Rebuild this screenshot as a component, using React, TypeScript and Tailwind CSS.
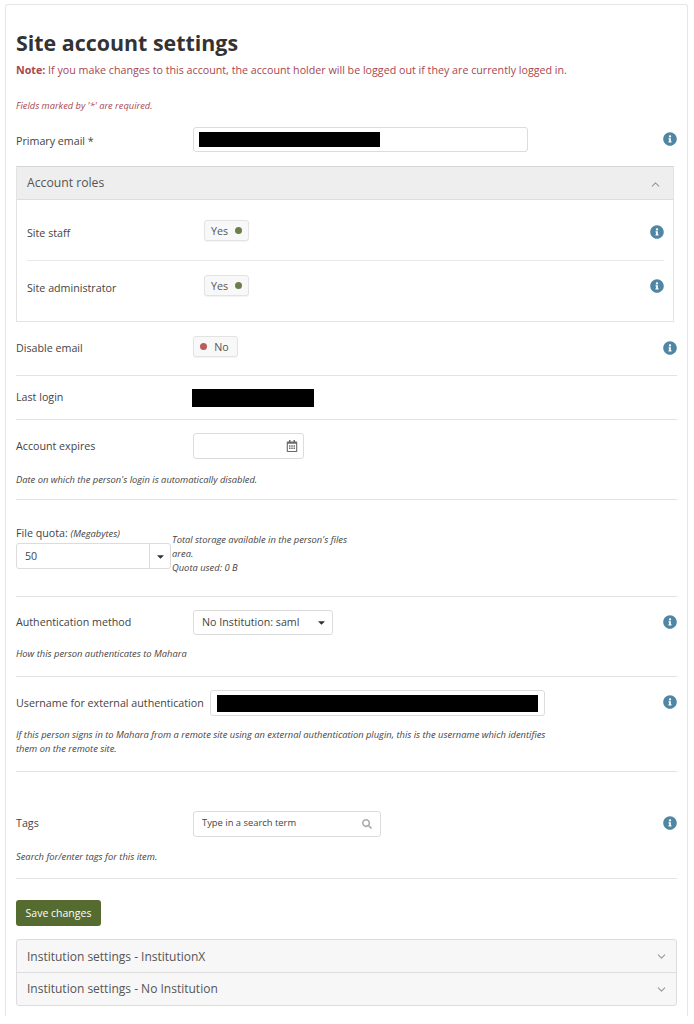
import { FaInfoCircle, FaRegCalendarAlt, FaSearch, FaCaretDown } from "react-icons/fa";
import { ChevronUp, ChevronDown } from "lucide-react";

const Info = () => <FaInfoCircle className="text-[#4f86a3] text-[14px] shrink-0" />;

function Toggle({ yes }: { yes: boolean }) {
  return (
    <div className="w-[45px] h-[21px] border border-[#e3e3e3] rounded-[3px] bg-[#f8f8f8] flex items-center justify-center gap-[7px] text-[10.7px] text-[#555] shadow-[0_1px_1px_rgba(0,0,0,0.05)]">
      {yes ? (
        <>
          <span className="mt-[1px]">Yes</span>
          <span className="w-[7px] h-[7px] rounded-full bg-[#6b7f4a]" />
        </>
      ) : (
        <>
          <span className="w-[7px] h-[7px] rounded-full bg-[#b85c5c]" />
          <span className="mr-[2px] mt-[1px]">No</span>
        </>
      )}
    </div>
  );
}

const Label = ({ children, w = "w-[177px]", className = "" }: { children: React.ReactNode; w?: string; className?: string }) => (
  <div className={`${w} shrink-0 text-[10.7px] text-[#444] ${className}`}>{children}</div>
);

const Desc = ({ children, className = "" }: { children: React.ReactNode; className?: string }) => (
  <div className={`text-[9.35px] italic leading-[14px] text-[#444] ${className}`}>{children}</div>
);

const inputBox = "bg-white border border-[#dcdcdc] rounded-[3px]";

export default function App() {
  return (
    <div className="bg-white h-[1024px] pt-[4px] pl-[5px] pr-[6px] font-['Open_Sans',sans-serif] text-[#444]">
      <div className="h-[1012px] border-x border-t border-[#e6e6e6] rounded-t-[3px] px-[10px]">
        <h1 className="pt-[24px] text-[21.4px] leading-[28px] font-bold text-[#333]">Site account settings</h1>
        <p className="mt-[5px] text-[10.7px] leading-[16px] text-[#a8474f]">
          <b>Note:</b> If you make changes to this account, the account holder will be logged out if they are currently logged in.
        </p>
        <p className="mt-[21px] text-[9.3px] leading-[14px] italic text-[#a8474f]">Fields marked by '*' are required.</p>

        <div className="mt-[14px] h-[27px] flex items-start">
          <Label className="mt-[6px]">Primary email *</Label>
          <div className={`${inputBox} w-[335px] h-[25px] flex items-center px-[5px]`}>
            <div className="w-[181px] h-[15px] bg-black" />
          </div>
          <div className="ml-auto mt-[5px]"><Info /></div>
        </div>

        <div className="mt-[12px] w-[658px] h-[156px] border border-[#e3e3e3] border-t-[#d5d5d5]">
          <div className="h-[33px] bg-[#eeeeee] border-b border-[#dddddd] flex items-center justify-between pl-[10px] pr-[11px] text-[12.2px] text-[#555]">
            <span>Account roles</span>
            <ChevronUp size={13} className="text-[#999] mt-[3px]" />
          </div>
          <div className="pl-[10px] pr-[9px]">
            <div className="h-[61px] pt-[20px] flex items-start border-b border-[#e8e8e8]">
              <Label className="mt-[5px]">Site staff</Label>
              <Toggle yes />
              <div className="ml-auto mt-[5px]"><Info /></div>
            </div>
            <div className="pt-[14px] flex items-start">
              <Label className="mt-[5px]">Site administrator</Label>
              <Toggle yes />
              <div className="ml-auto mt-[4px]"><Info /></div>
            </div>
          </div>
        </div>

        <div className="h-[54px] pt-[14px] flex items-start border-b border-[#e3e3e3]">
          <Label className="mt-[4px]">Disable email</Label>
          <Toggle yes={false} />
          <div className="ml-auto mt-[5px]"><Info /></div>
        </div>

        <div className="h-[44px] flex items-center border-b border-[#e3e3e3]">
          <Label>Last login</Label>
          <div className="w-[122px] h-[18px] bg-black ml-[-1px]" />
        </div>

        <div className="h-[80px] pt-[13px] border-b border-[#e3e3e3]">
          <div className="flex items-center h-[26px]">
            <Label>Account expires</Label>
            <div className={`${inputBox} w-[111px] h-[26px] flex items-center justify-end pr-[5px]`}>
              <FaRegCalendarAlt className="text-[#6a6a6a] text-[12px]" />
            </div>
          </div>
          <Desc className="mt-[14px]">Date on which the person's login is automatically disabled.</Desc>
        </div>

        <div className="h-[97px] pt-[24px] border-b border-[#e3e3e3] flex items-start">
          <div className="w-[155px] shrink-0">
            <div className="mt-[1px] text-[10.7px] leading-[16px] text-[#444]">File quota: <i className="text-[9.35px]">(Megabytes)</i></div>
            <div className={`${inputBox} mt-[1px] h-[26px] flex items-center`}>
              <span className="flex-1 pl-[8px] text-[10.7px]">50</span>
              <span className="w-[21px] h-full border-l border-[#dcdcdc] flex items-center justify-center">
                <FaCaretDown className="text-[#333] text-[11px]" />
              </span>
            </div>
          </div>
          <Desc className="ml-[1px] mt-[9px] w-[180px]">
            Total storage available in the person's files area.
            <br />
            Quota used: 0 B
          </Desc>
        </div>

        <div className="h-[80px] pt-[13px] border-b border-[#e3e3e3]">
          <div className="flex items-center h-[25px]">
            <Label>Authentication method</Label>
            <div className={`${inputBox} w-[140px] h-[25px] flex items-center justify-between pl-[8px] pr-[5px] text-[10.7px]`}>
              <span>No Institution: saml</span>
              <FaCaretDown className="text-[#333] text-[11px]" />
            </div>
            <div className="ml-auto mt-[-2px]"><Info /></div>
          </div>
          <Desc className="mt-[12px]">How this person authenticates to Mahara</Desc>
        </div>

        <div className="h-[95px] pt-[13px] border-b border-[#e3e3e3]">
          <div className="flex items-center h-[26px]">
            <Label w="w-[194px]">Username for external authentication</Label>
            <div className={`${inputBox} w-[335px] h-[26px] flex items-center px-[6px]`}>
              <div className="w-[321px] h-[17px] bg-black" />
            </div>
            <div className="ml-auto mt-[-2px]"><Info /></div>
          </div>
          <Desc className="mt-[12px] w-[540px]">
            If this person signs in to Mahara from a remote site using an external authentication plugin, this is the username which identifies them on the remote site.
          </Desc>
        </div>

        <div className="h-[107px] pt-[39px] border-b border-[#e3e3e3]">
          <div className="flex items-center h-[26px]">
            <Label className="mt-[-2px]">Tags</Label>
            <div className={`${inputBox} w-[188px] h-[26px] flex items-center justify-between pl-[8px] pr-[8px] text-[9.4px]`}>
              <span className="mt-[-2px]">Type in a search term</span>
              <FaSearch className="text-[#aaa] text-[10px]" />
            </div>
            <div className="ml-auto mt-[-2px]"><Info /></div>
          </div>
          <Desc className="mt-[13px]">Search for/enter tags for this item.</Desc>
        </div>

        <button className="mt-[21px] block w-[85px] h-[26px] rounded-[3px] bg-[#556b2f] text-white text-[10.5px] pt-[1px]">Save changes</button>

        <div className="mt-[13px] border border-[#dddddd] rounded-[3px] bg-[#f7f7f7] text-[12px] text-[#555]">
          <div className="h-[33px] flex items-center justify-between pl-[10px] pr-[8px] border-b border-[#dddddd]">
            <span className="mt-[1px]">Institution settings - InstitutionX</span>
            <ChevronDown size={13} className="text-[#999]" />
          </div>
          <div className="h-[32px] flex items-center justify-between pl-[10px] pr-[8px]">
            <span>Institution settings - No Institution</span>
            <ChevronDown size={13} className="text-[#999]" />
          </div>
        </div>
      </div>
    </div>
  );
}
